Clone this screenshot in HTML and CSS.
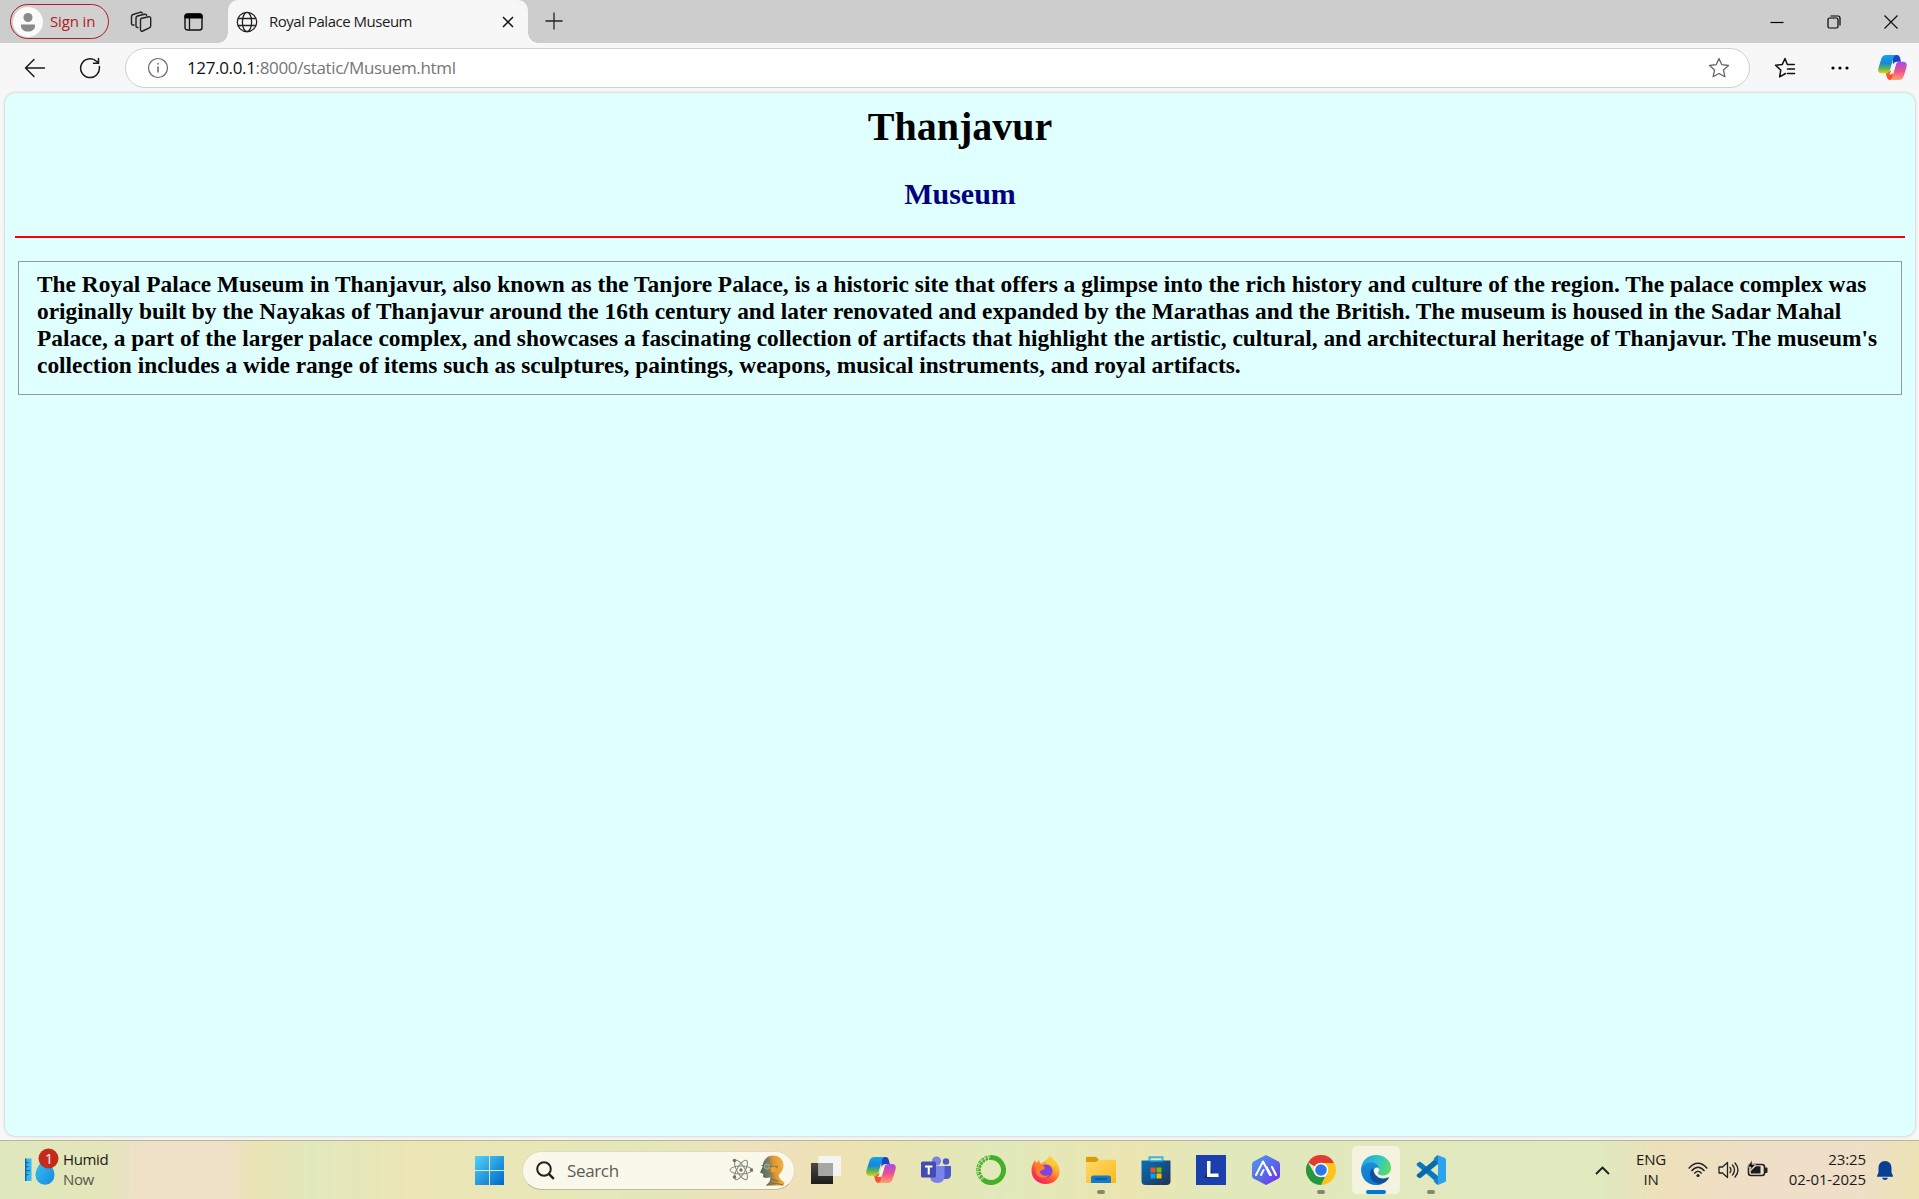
FILE: index.html
```html
<!DOCTYPE html>
<html lang="en">
<head>
<meta charset="utf-8">
<title>Royal Palace Museum</title>
<link rel="stylesheet" href="styles.css">
</head>
<body>
<svg class="defs" width="0" height="0" aria-hidden="true">
  <defs>
    <linearGradient id="cpBlue" x1="0" y1="0" x2="0" y2="1"><stop offset="0" stop-color="#12a5ee"/><stop offset=".45" stop-color="#1787d8"/><stop offset=".75" stop-color="#5fb84c"/><stop offset="1" stop-color="#f3cb12"/></linearGradient>
    <linearGradient id="cpPink" x1="0" y1="0" x2="0" y2="1"><stop offset="0" stop-color="#a04df0"/><stop offset=".5" stop-color="#ee4f8d"/><stop offset="1" stop-color="#ffa36b"/></linearGradient>
    <linearGradient id="win" x1="0" y1="0" x2="1" y2="1"><stop offset="0" stop-color="#4fd3fb"/><stop offset="1" stop-color="#0067c8"/></linearGradient>
    <symbol id="copilot" viewBox="0 0 30 28">
      <path d="M15 1h4.500c2 0 2.800 1 3.300 3l1 4h-4c-2.500 0-3.600 1-4.300 3z" fill="#1545c8"/>
      <path d="M8 19l1 4.500c.7 2.500 1.800 3.500 4 3.500h3l-1-10z" fill="#f4552c"/>
      <path d="M8.500 1H19c-2 .4-2.700 2-3.300 4l-3.300 11.500C11.600 19 10.500 20 8 20H4c-3.500 0-4.400-2.400-3.400-6L3.400 5C4.300 2.300 5.700 1 8.500 1z" fill="url(#cpBlue)"/>
      <path d="M21.500 27H11.800c2-.4 2.700-2 3.300-4l3.300-11.500C19 9 20.200 8 22.500 8H26c3.500 0 4.400 2.400 3.400 6l-2.800 9c-.9 2.700-2.300 4-5.100 4z" fill="url(#cpPink)"/>
      <path d="M16 11.500h2.300l-2.700 8q-.6 1.500-1.800 1.500H11q1.600-.5 2.200-2.500z" fill="#fdf6f2"/>
    </symbol>
  </defs>
</svg>
<div class="screen">
  <header class="tabstrip">
    <div class="signin">
      <svg class="avatar" width="30" height="30" viewBox="0 0 30 30"><circle cx="15" cy="15" r="15" fill="#fafafa"/><circle cx="15" cy="10.500" r="4.500" fill="#8a8a8a"/><path d="M8 17.500h14v1.500c0 3.500-3 5.500-7 5.500s-7-2-7-5.500z" fill="#8a8a8a"/></svg>
      <span>Sign in</span>
    </div>
    <svg class="workspaces" width="22" height="22" viewBox="0 0 22 22" fill="none" stroke="#222" stroke-width="1.400" stroke-linejoin="round" stroke-linecap="round"><path d="M11 7.500l7.500-1.700q2.200-.3 2.200 1.500v7.500q0 1.500-1.300 2l-6.700 3.200q-2 .7-2.200-1.200V9q0-1.200.5-1.500z"/><path d="M8 16.500q-2 .2-2-1.500V7q0-1.500 1.500-2l7-1.700q1.800-.3 2.200 1"/><path d="M4 14q-2.500.3-2.500-1.500V5.500q0-1.500 1.500-2L10 1.300q1.800-.4 2.300.8"/></svg>
    <svg class="vtabs" width="20" height="18" viewBox="0 0 20 18"><rect x="1" y="1" width="17" height="16" rx="2.500" fill="none" stroke="#111" stroke-width="1.400"/><path d="M.4 5.500V3q0-2.500 2.600-2.500h13Q18.600.5 18.600 3v2.500z" fill="#000"/><path d="M5.500 5v12" stroke="#111" stroke-width="1.300"/></svg>
    <div class="tab">
      <svg class="globe" width="22" height="22" viewBox="0 0 22 22" fill="none" stroke="#222" stroke-width="1.300"><circle cx="11" cy="11" r="9.700"/><ellipse cx="11" cy="11" rx="4.600" ry="9.700"/><path d="M2.200 7.500h17.600M2.200 14.500h17.600"/></svg>
      <span class="tab-title">Royal Palace Museum</span>
      <svg class="tab-close" width="12" height="12" viewBox="0 0 12 12" stroke="#111" stroke-width="1.500"><path d="M1 1l10 10M11 1L1 11"/></svg>
    </div>
    <svg class="plus" width="18" height="18" viewBox="0 0 18 18" stroke="#222" stroke-width="1.300"><path d="M9 .5v17M.5 9h17"/></svg>
    <div class="controls">
      <svg width="14" height="14" viewBox="0 0 14 14"><path d="M.5 7.500h13" stroke="#000" stroke-width="1.200"/></svg>
      <svg width="14" height="14" viewBox="0 0 14 14" fill="none" stroke="#000" stroke-width="1.200"><rect x="1" y="3" width="10" height="10" rx="1.500"/><path d="M3.500 1H11q2 0 2 2v7.500"/></svg>
      <svg width="14" height="14" viewBox="0 0 14 14" stroke="#111" stroke-width="1.200"><path d="M.5.5l13 13M13.500.5l-13 13"/></svg>
    </div>
  </header>

  <nav class="toolbar">
    <svg class="back" width="22" height="20" viewBox="0 0 22 20" fill="none" stroke="#1a1a1a" stroke-width="1.500" stroke-linecap="round" stroke-linejoin="round"><path d="M10 1.500L1.500 10l8.500 8.500M1.500 10h19"/></svg>
    <svg class="reload" width="22" height="22" viewBox="0 0 22 22" fill="none" stroke="#1a1a1a" stroke-width="1.500" stroke-linecap="round"><path d="M20.300 9.500A9.400 9.400 0 1 1 17.500 4.300L19.500 6M19.500 1.500V6.300h-5"/></svg>
    <div class="address">
      <svg class="info" width="22" height="22" viewBox="0 0 22 22" fill="none" stroke="#666" stroke-width="1.200"><circle cx="11" cy="11" r="9.500"/><path d="M11 9.500v6" stroke-width="1.500"/><circle cx="11" cy="6.800" r=".6" fill="#666" stroke-width=".6"/></svg>
      <span class="url"><b>127.0.0.1</b>:8000/static/Musuem.html</span>
      <svg class="star" width="22" height="22" viewBox="0 0 22 22" fill="none" stroke="#666" stroke-width="1.300" stroke-linejoin="round"><path d="M11 1.500l2.800 6.200 6.700.8-5 4.600 1.400 6.700L11 16.500l-5.900 3.300 1.400-6.700-5-4.600 6.700-.8z"/></svg>
    </div>
    <svg class="favs" width="22" height="22" viewBox="0 0 22 22" fill="none" stroke="#111" stroke-width="1.500" stroke-linejoin="round" stroke-linecap="round"><path d="M11.500 16.500l-5.900 3.300 1.200-6.700-5.300-4.800 6.700-.7L11 1.500l2.300 6h7M13.500 12h7M13.500 16.500h7"/></svg>
    <svg class="dots" width="18" height="4" viewBox="0 0 18 4"><circle cx="2" cy="2" r="1.600"/><circle cx="9" cy="2" r="1.600"/><circle cx="16" cy="2" r="1.600"/></svg>
    <svg class="copilot-btn" width="29" height="27"><use href="#copilot"/></svg>
  </nav>

  <div class="viewport">
    <main class="page">
      <h1>Thanjavur</h1>
      <h2>Museum</h2>
      <div class="rule"></div>
      <section class="box">
        <div class="l1">The Royal Palace Museum in Thanjavur, also known as the Tanjore Palace, is a historic site that offers a glimpse into the rich history and culture of the region. The palace complex was</div>
        <div class="l2">originally built by the Nayakas of Thanjavur around the 16th century and later renovated and expanded by the Marathas and the British. The museum is housed in the Sadar Mahal</div>
        <div class="l3">Palace, a part of the larger palace complex, and showcases a fascinating collection of artifacts that highlight the artistic, cultural, and architectural heritage of Thanjavur. The museum's</div>
        <div class="l4">collection includes a wide range of items such as sculptures, paintings, weapons, musical instruments, and royal artifacts.</div>
      </section>
    </main>
  </div>

  <footer class="taskbar">
    <div class="weather">
      <svg width="36" height="40" viewBox="0 0 36 40">
        <defs><linearGradient id="drop" x1="0" y1="0" x2="1" y2="1"><stop offset="0" stop-color="#3cc4f8"/><stop offset="1" stop-color="#148bdc"/></linearGradient></defs>
        <path d="M1 10.500h6.500V33H1z" fill="#35b8f2"/><path d="M1 10.500h1.500V33H1zM2 14h2.500v1.300H2zM2 18h2.500v1.300H2zM2 22h4v1.300H2zM2 26h2.500v1.300H2z" fill="#0c6ab0"/>
        <path d="M21 8c4 7 9.500 12 9.500 19a9.500 9.800 0 0 1-19 0c0-7 5.500-12 9.500-19z" fill="url(#drop)"/>
        <circle cx="24.500" cy="10.500" r="10" fill="#c42b1c"/>
        <text x="25" y="15.500" text-anchor="middle" font-size="14" fill="#fff">1</text>
      </svg>
      <div class="two"><span class="dark">Humid</span><span class="mute">Now</span></div>
    </div>
    <div class="apps">
      <svg class="start" width="29" height="29" viewBox="0 0 29 29"><path d="M0 0h14v14H0zM15 0h14v14H15zM0 15h14v14H0zM15 15h14v14H15z" fill="url(#win)"/></svg>
      <div class="search">
        <svg class="mag" width="19" height="19" viewBox="0 0 19 19" fill="none" stroke="#222" stroke-width="2"><circle cx="8" cy="8" r="6.800"/><path d="M12.800 12.800l5 5" stroke-width="2.400"/></svg>
        <span>Search</span>
        <svg class="atom" width="24" height="24" viewBox="0 0 24 24" fill="none" stroke="#85857f" stroke-width="1"><ellipse cx="12" cy="12" rx="11" ry="4"/><ellipse cx="12" cy="12" rx="11" ry="4" transform="rotate(60 12 12)"/><ellipse cx="12" cy="12" rx="11" ry="4" transform="rotate(120 12 12)"/><g fill="#6d756b" stroke="none"><circle cx="12" cy="12" r="1.700"/><circle cx="5.500" cy="2.500" r="1.800"/><circle cx="22.500" cy="12" r="1.800"/><circle cx="5.500" cy="19" r="1.800"/></g></svg>
        <svg class="head" width="27" height="31" viewBox="0 0 27 31">
          <defs><linearGradient id="skin" x1="0" y1=".3" x2="1" y2=".1"><stop offset="0" stop-color="#4e6b60"/><stop offset=".36" stop-color="#87805a"/><stop offset=".55" stop-color="#e0982f"/><stop offset="1" stop-color="#f2b54c"/></linearGradient></defs>
          <path d="M14 .5c6 0 10.500 4 10.500 9.500 0 5-2.500 7.500-4.500 9.500-1 2.500 1 5 5.500 8l-1 3H6.500c3-2 5-4.500 5-8l-5 .5-2.500-1 .3-3-3.300-1.500L3.500 12C4 5 8 .5 14 .5z" fill="url(#skin)"/>
          <path d="M2.500 10.500l8.500 1 8 .5" fill="none" stroke="#56675c" stroke-width="1.100"/><circle cx="8" cy="11.500" r="2.600" fill="#718d82" stroke="#c8c39d" stroke-width=".7"/><circle cx="14.500" cy="14.500" r="2.900" fill="#f0a12c"/><path d="M11.500 23.500l8 3M8 30l8-2 8 2" fill="none" stroke="#8f6a30" stroke-width="1.200"/>
        </svg>
      </div>
      <div class="app"><svg width="30" height="28" viewBox="0 0 30 28"><defs><linearGradient id="tvd" x1="0" y1="0" x2="0" y2="1"><stop offset="0" stop-color="#484846"/><stop offset="1" stop-color="#1c1c1b"/></linearGradient></defs><path d="M0 7h22v21H0z" fill="url(#tvd)"/><path d="M7.500 0H30v20H7.500z" fill="#f4f4f3"/><path d="M7.500 7H22v13H7.500z" fill="#a6a6a4"/></svg></div>
      <div class="app"><svg width="30" height="28"><use href="#copilot"/></svg></div>
      <div class="app"><svg width="30" height="28" viewBox="0 0 30 28"><circle cx="15.500" cy="5" r="4.600" fill="#7b83eb"/><circle cx="25" cy="5.500" r="3.200" fill="#5059c9"/><path d="M20 10h10v8.500c0 3-2 4.500-4.500 4.500H20z" fill="#5059c9"/><path d="M9 10h14.500v10q0 7-7.200 7T9 20z" fill="#7b83eb"/><rect y="5.500" width="15" height="16" rx="1.500" fill="#444bb1"/><path d="M4 9.500h7.500v2H8.800v7H6.700v-7H4z" fill="#fff"/></svg></div>
      <div class="app"><svg width="30" height="30" viewBox="0 0 30 30" fill="none" stroke="#42b029"><path d="M15 2.500A12.500 12.500 0 1 1 7 24.600" stroke-width="5"/><path d="M15.500 2.500A12.500 12.500 0 0 0 7 24.600" stroke-width="4.600" stroke-dasharray="2.800 .9"/><path d="M14 2A13.200 13.200 0 0 0 5 24" stroke="#e6e8ba" stroke-width="1.100" stroke-dasharray="1.500 2.200"/></svg></div>
      <div class="app"><svg width="29" height="30" viewBox="0 0 29 30"><defs><linearGradient id="ff" x1=".9" y1="0" x2=".2" y2="1"><stop offset="0" stop-color="#fff04a"/><stop offset=".4" stop-color="#ffa42e"/><stop offset=".7" stop-color="#ff4b36"/><stop offset="1" stop-color="#ed1878"/></linearGradient></defs><path d="M17 4l2-4c1 3 4 4 6 7 2 2.500 3.700 5.500 3.700 9.500 0 7-6 12.500-14 12.500S.5 23.500.5 15.500C.5 11 2 8 4 5l1 3 3-3 1.500 4z" fill="url(#ff)"/><circle cx="15" cy="16" r="6.500" fill="#8043dd"/><path d="M4 10c4-2 9 0 10 3-1 2-4 2-5 3 0 4 5 6 9 4-2 4-11 4-13-2z" fill="#ff7c32"/><path d="M15 9c3-1 7 1 8 4l2-5-7-6c-2 2-3 4-3 7z" fill="#ffc83a"/></svg></div>
      <div class="app run"><svg width="30" height="28" viewBox="0 0 30 28"><defs><linearGradient id="fld" x1="0" y1="0" x2="1" y2="1"><stop offset="0" stop-color="#ffd96b"/><stop offset="1" stop-color="#fbb917"/></linearGradient></defs><path d="M0 8V2Q0 .8 1.500.8H10L13 4l-3 4z" fill="#d99d0b"/><path d="M0 6h10l3-2.200h17V27H0z" fill="url(#fld)"/><path d="M5 27v-5q0-2.500 2.500-2.500h15Q25 19.500 25 22v5z" fill="#117ccc"/><path d="M9 23h12" stroke="#084d86" stroke-width="1.300"/></svg></div>
      <div class="app"><svg width="30" height="30" viewBox="0 0 30 30"><defs><linearGradient id="str" x1="0" y1="0" x2="1" y2="1"><stop offset="0" stop-color="#0870bd"/><stop offset="1" stop-color="#213250"/></linearGradient></defs><path d="M8.500 7V2.200h13V7" fill="none" stroke="#32b8e8" stroke-width="2"/><path d="M.5 5.500h29V26q0 4-4 4h-21q-4 0-4-4z" fill="url(#str)"/><path d="M8 5.500v1h14v-1" fill="#32b8e8"/><path d="M9.500 12.500h5v5h-5z" fill="#f25022"/><path d="M15.500 12.500h5v5h-5z" fill="#7fba00"/><path d="M9.500 18.500h5v5h-5z" fill="#00a4ef"/><path d="M15.500 18.500h5v5h-5z" fill="#ffb900"/></svg></div>
      <div class="app"><svg width="30" height="30" viewBox="0 0 30 30"><path d="M0 0h30v30H0z" fill="#1c3fae"/><path d="M11 7v11l-3 5h5l5-3z" fill="#12285e"/><path d="M11 6h3.500v12.500h8V22H11z" fill="#fff"/></svg></div>
      <div class="app"><svg width="28" height="30" viewBox="0 0 28 30"><defs><linearGradient id="hex" x1="0" y1="0" x2="1" y2="1"><stop offset="0" stop-color="#4f9bee"/><stop offset=".55" stop-color="#5868e8"/><stop offset="1" stop-color="#7628e8"/></linearGradient></defs><path d="M14 0l12.500 6.500Q28 7.500 28 9v12q0 1.500-1.500 2.500L14 30 1.500 23.500Q0 22.500 0 21V9q0-1.500 1.500-2.500z" fill="url(#hex)"/><path d="M4 20L11 6.500 18 20M9 20l2.500-5M14.500 12l4.500 8M20 12l4 8" fill="none" stroke="#fff" stroke-width="2" stroke-linecap="round" stroke-linejoin="round"/></svg></div>
      <div class="app run"><svg width="30" height="30" viewBox="0 0 30 30"><path d="M15 15L2 7.500A15 15 0 0 1 28 7.500z" fill="#e33b2e"/><path d="M15 8h13.300A15 15 0 0 1 15 30l6-11.500z" fill="#fcc31e"/><path d="M2 7.500l6.500 11 6.500 3.500h4L15 30A15 15 0 0 1 2 7.500z" fill="#26963f"/><circle cx="15" cy="15" r="7.300" fill="#fff"/><circle cx="15" cy="15" r="5.800" fill="#2f76e8"/></svg></div>
      <div class="app run active"><svg width="30" height="30" viewBox="0 0 30 30"><defs><linearGradient id="ed1" x1="0" y1=".3" x2="1" y2=".6"><stop offset="0" stop-color="#1ea2dc"/><stop offset=".5" stop-color="#2fc4cf"/><stop offset="1" stop-color="#5cdc62"/></linearGradient><linearGradient id="ed2" x1="0" y1="0" x2="0" y2="1"><stop offset="0" stop-color="#1b8dd8"/><stop offset="1" stop-color="#0878d0"/></linearGradient></defs><path d="M0 14C1 5 7 0 15 0c9 0 15 6 15 13 0 5-4 7.500-8 7.500-3 0-5.500-1-5-3 1-1.500 1.500-2 1.200-3.500C17 9 6 7 0 14z" fill="url(#ed1)"/><path d="M0 14c2-5 6-6.500 10-6.500 5 0 8 3 8 6.500-2-3-6-1-6 4 0 6 5 10 10 10.500-2 1-5 1.500-7 1.500C6 30 0 23 0 14z" fill="url(#ed2)"/><path d="M12 13c-4 3-4 8-1 12 3 3.500 7 4.500 11 3.300 3-1.300 5-3.300 6-5.800-.5-.7-1-.2-2 .3-5 2-13 0-14-9.800z" fill="#0f4f9c"/></svg></div>
      <div class="app run"><svg width="30" height="30" viewBox="0 0 30 30"><path d="M1 8.500l2-1.500q1-.5 2 .3L22 21v7.500L1 10.500q-.8-1 0-2z" fill="#0b78bd"/><path d="M1 21.500l2 1.500q1 .5 2-.3L22 9V1.500L1 19.500q-.8 1 0 2z" fill="#0a69ad"/><path d="M22 .3L29 3q1 .5 1 1.500v21q0 1-1 1.500l-7 3z" fill="#2ca3ee"/><path d="M22 .3v29.400q-1 0-2-1L17.500 26 22 21V9l-4.500-5L20 1.200q1-1 2-.9z" fill="#1583cc"/></svg></div>
    </div>
    <div class="tray">
      <svg class="chev" width="15" height="9" viewBox="0 0 15 9" fill="none" stroke="#1c1c1c" stroke-width="1.800"><path d="M1 8l6.500-6.500L14 8"/></svg>
      <div class="two lang"><span>ENG</span><span>IN</span></div>
      <svg class="wifi" width="20" height="16" viewBox="0 0 20 16" fill="none" stroke="#222" stroke-width="1.400"><path d="M.7 6.500q9.300-10.500 18.600 0M3.500 9q6.500-7.500 13 0M6.300 11.500q3.700-4.500 7.400 0"/><circle cx="10" cy="13.500" r="1.600" fill="#222" stroke="none"/></svg>
      <svg class="vol" width="21" height="18" viewBox="0 0 21 18" fill="none" stroke="#222" stroke-width="1.300" stroke-linejoin="round" stroke-linecap="round"><path d="M1 6h3.500L9.500 1.500v15L4.500 12H1z"/><path d="M12 6.500q2 2.500 0 5M14.500 4q4 5 0 10M17 2q6 7 0 14"/></svg>
      <svg class="bat" width="21" height="17" viewBox="0 0 21 17"><rect x="1.500" y="4.500" width="16" height="11" rx="2.500" fill="none" stroke="#222" stroke-width="1.600"/><path d="M18 7.500h1.500q1 0 1 1V12q0 1-1 1H18z" fill="#222"/><path d="M3.800 13.500V11l5-4.700h4.700v7.200z" fill="#1a1a1a"/><path d="M5 0L.5 7H4L2.500 11 8.500 4.500H5z" fill="#111" stroke="#efe0c8" stroke-width=".6"/></svg>
      <div class="two clock"><span>23:25</span><span>02-01-2025</span></div>
      <svg class="bell" width="16" height="19" viewBox="0 0 16 19" fill="#063f94"><path d="M8 0c4 0 6.500 3 6.500 7v4.500L16 15v.8H0V15l1.500-3.500V7c0-4 2.500-7 6.500-7zM5 16.800h6q-.7 2.200-3 2.200t-3-2.200z"/></svg>
    </div>
  </footer>
</div>
</body>
</html>
```
FILE: styles.css
```css
* { box-sizing: border-box; }
body { margin: 0; font-family: "Open Sans", "Noto Sans", sans-serif; background: #f7f7f7; }
svg { display: block; flex: none; }
.defs { position: absolute; }
.screen { width: 1919px; height: 1199px; display: flex; flex-direction: column; overflow: hidden; }
span, .box div { white-space: nowrap; }

/* tab strip */
.tabstrip { height: 43px; flex: none; display: flex; align-items: center; background: #cdcdcd; padding-left: 10px; }
.signin { width: 99px; height: 35px; border: 1.500px solid #b01c22; border-radius: 18px; display: flex; align-items: center; padding-left: 2px; color: #b01c22; font-size: 15px; letter-spacing: -.15px; background: #d1d1d1; }
.signin span { margin-left: 7px; padding-bottom: 2px; }
.workspaces { margin-left: 21px; }
.vtabs { margin-left: 32px; }
.tab { width: 300px; height: 43px; margin-left: 24px; background: #f7f7f7; border-radius: 10px 10px 0 0; display: flex; align-items: center; padding-left: 8px; position: relative; }
.tab::before, .tab::after { content: ""; position: absolute; bottom: 0; width: 10px; height: 10px; }
.tab::before { left: -10px; background: radial-gradient(circle at 0 0, transparent 9.500px, #f7f7f7 10px); }
.tab::after { right: -10px; background: radial-gradient(circle at 100% 0, transparent 9.500px, #f7f7f7 10px); }
.tab-title { width: 233px; margin-left: 11px; padding-bottom: 2px; font-size: 15px; letter-spacing: -.48px; color: #1b1b1b; }
.plus { margin-left: 17px; margin-top: -1px; }
.controls { margin-left: auto; display: flex; gap: 43px; padding-right: 21px; }

/* toolbar */
.toolbar { height: 50px; flex: none; display: flex; align-items: center; padding: 0 0 1px 24px; }
.reload { margin-left: 33px; }
.address { width: 1625px; height: 40px; margin-left: 24px; border: 1px solid #cfcfcf; border-radius: 20px; background: #fff; display: flex; align-items: center; padding: 0 19px 0 21px; }
.url { margin-left: 18px; padding-bottom: 1px; font-size: 17px; letter-spacing: -.35px; color: #767676; }
.url b { font-weight: 400; color: #111; }
.star { margin-left: auto; }
.favs { margin-left: 24px; }
.dots { margin-left: 35px; }
.copilot-btn { margin-left: 29px; }

/* page */
.viewport { height: 1047px; flex: none; padding: 0 4px 3px 5px; }
.page { height: 1043px; background: #e0ffff; border-radius: 10px; box-shadow: 0 0 3px rgba(0, 0, 0, .25); padding: 10px 10px 0; font-family: "Liberation Serif", serif; font-weight: 700; }
h1 { margin: 0; font-size: 40px; line-height: 47px; text-align: center; color: #000; }
h2 { margin: 26px 0 0; font-size: 30px; line-height: 35px; text-align: center; color: #000080; }
.rule { height: 2px; background: #f00; margin-top: 25px; }
.box { margin: 23px 3px 0; height: 134px; border: 1px solid #999; padding: 9px 0 0 18px; font-size: 23.400px; line-height: 27px; letter-spacing: .004px; }

/* taskbar */
.taskbar { height: 59px; flex: none; display: flex; align-items: center; border-top: 1px solid #b7b791; background: linear-gradient(90deg, #dfe8bd 0, #e4e6ba 100px, #efe0c8 145px, #efe0c8 225px, #ebe4b5 258px, #e1e9bc 310px, #ece5b5 410px, #e8e7b8 550px, #e2e8ba 640px, #f0e0bd 760px, #ece3b2 860px, #e1e9ba 1000px, #ece5b2 1130px, #e1e8bb 1220px, #e1e9bf 1600px, #ede0ba 1665px, #efdfc9 1760px, #efdfc9 1850px, #ece2b5 1919px); }
.weather { width: 450px; display: flex; align-items: center; padding-left: 24px; }
.two { display: flex; flex-direction: column; padding-bottom: 2px; font-size: 15px; line-height: 20px; color: #1b1b1b; }
.weather .two { margin-left: 3px; letter-spacing: -.35px; }
.weather .mute { color: #55564a; }
.weather svg { margin-top: -4px; }
.apps { display: flex; align-items: center; padding-left: 25px; }
.start { margin-top: 1px; }
.search { width: 273px; height: 39px; margin: 0 3px 0 18px; border-radius: 20px; background: #faf8ea; border: 1px solid #dedcbd; border-bottom-color: #bdbb98; display: flex; align-items: center; padding-left: 13px; font-size: 17px; color: #5c5c55; letter-spacing: -.35px; }
.search span { width: 162px; margin-left: 12px; }
.head { margin-left: 6px; }
.app { width: 55px; height: 48px; display: flex; align-items: center; justify-content: center; position: relative; }
.run::after { content: ""; position: absolute; left: 23.500px; bottom: 0; width: 8px; height: 4px; border-radius: 2px; background: #85866e; }
.active { width: 48px; margin: 0 3px 0 4px; background: #f3f3df; border-radius: 5px; }
.active::after { left: 14px; width: 20px; background: #0078d4; }
.tray { margin-left: auto; display: flex; align-items: center; padding-right: 26px; }
.lang { width: 54px; margin-left: 14px; align-items: center; letter-spacing: -.2px; }
.wifi { margin-left: 10px; }
.vol { margin-left: 10px; }
.bat { margin-left: 8px; margin-top: -4px; }
.clock { width: 98px; align-items: flex-end; letter-spacing: -.1px; }
.bell { margin-left: 11px; }
```
